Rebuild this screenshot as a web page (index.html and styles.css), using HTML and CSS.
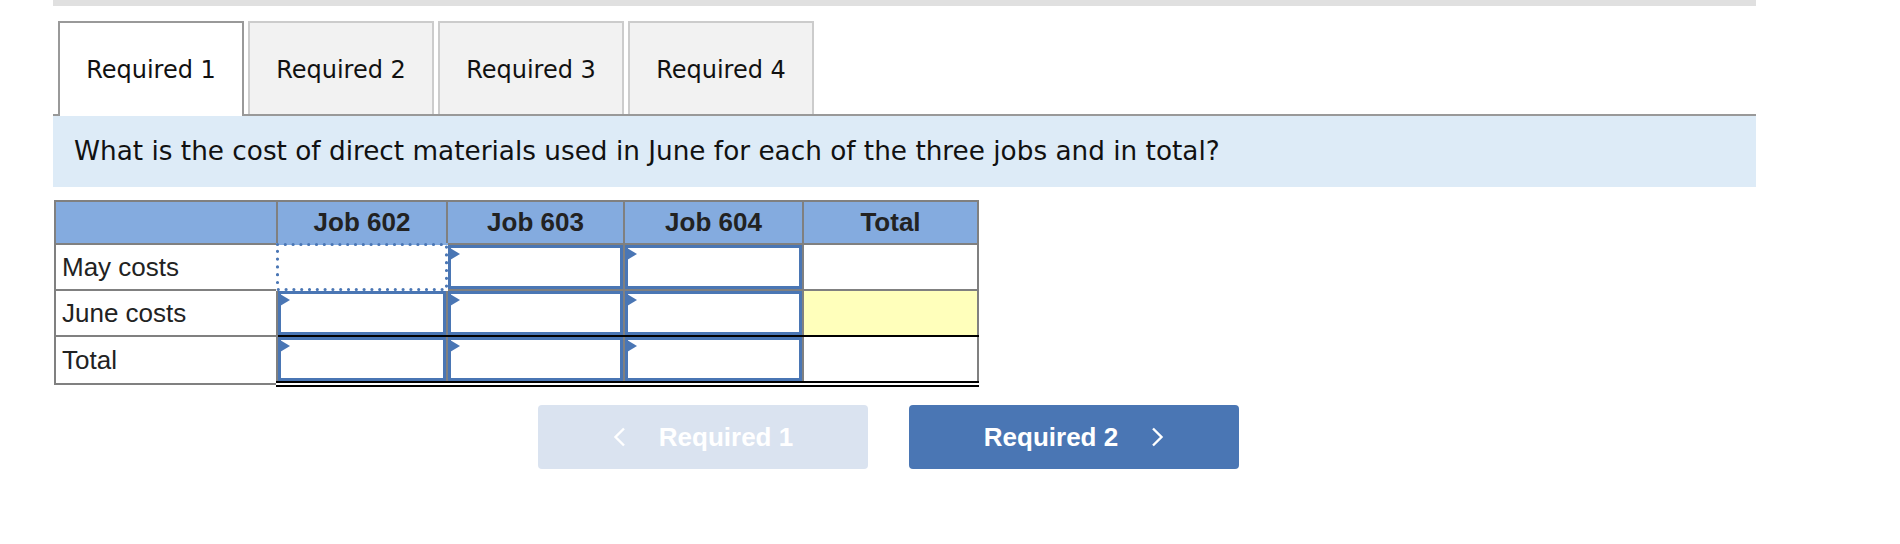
FILE: index.html
```html
<!DOCTYPE html>
<html>
<head>
<meta charset="utf-8">
<link rel="stylesheet" href="styles.css">
</head>
<body>
<div class="page">
  <div class="topbar"></div>
  <div class="tabs">
    <div class="tab active">Required 1</div>
    <div class="tab">Required 2</div>
    <div class="tab">Required 3</div>
    <div class="tab">Required 4</div>
  </div>
  <div class="question">What is the cost of direct materials used in June for each of the three jobs and in total?</div>
  <table class="grid">
    <colgroup>
      <col class="c-lbl"><col class="c-602"><col class="c-603"><col class="c-604"><col class="c-tot">
    </colgroup>
    <thead>
      <tr><th></th><th>Job 602</th><th>Job 603</th><th>Job 604</th><th>Total</th></tr>
    </thead>
    <tbody>
      <tr class="r1">
        <td class="lbl">May costs</td>
        <td class="in focus"><div class="dots"><svg class="dots-svg"><rect class="dots-rect"/></svg></div></td>
        <td class="in"><div class="box"><span class="mark"></span></div></td>
        <td class="in"><div class="box"><span class="mark"></span></div></td>
        <td class="tot"></td>
      </tr>
      <tr class="r2">
        <td class="lbl">June costs</td>
        <td class="in"><div class="box"><span class="mark"></span></div></td>
        <td class="in"><div class="box"><span class="mark"></span></div></td>
        <td class="in"><div class="box"><span class="mark"></span></div></td>
        <td class="tot yellow"></td>
      </tr>
      <tr class="r3">
        <td class="lbl">Total</td>
        <td class="in"><div class="box"><span class="mark"></span></div></td>
        <td class="in"><div class="box"><span class="mark"></span></div></td>
        <td class="in"><div class="box"><span class="mark"></span></div></td>
        <td class="tot"></td>
      </tr>
    </tbody>
  </table>
  <div class="nav">
    <button class="btn prev">
      <svg class="chev" width="13" height="20" viewBox="0 0 13 20"><polyline points="11,1.5 2.5,10 11,18.5" fill="none" stroke="#ffffff" stroke-width="2.4"/></svg>
      <span>Required 1</span>
    </button>
    <button class="btn next">
      <span>Required 2</span>
      <svg class="chev" width="13" height="20" viewBox="0 0 13 20"><polyline points="2,1.5 10.5,10 2,18.5" fill="none" stroke="#ffffff" stroke-width="2.4"/></svg>
    </button>
  </div>
</div>
</body>
</html>
```

FILE: styles.css
```css
html, body {
  margin: 0;
  padding: 0;
  background: #ffffff;
}

.page {
  margin-left: 53px;
  width: 1703px;
}

.topbar {
  height: 6px;
  background: #e0e0e0;
}

.tabs {
  display: flex;
  gap: 4px;
  margin-top: 15px;
  padding-left: 5px;
  border-bottom: 2px solid #999999;
  height: 93px;
}

.tab {
  box-sizing: border-box;
  width: 186px;
  height: 93px;
  border: 2px solid #cccccc;
  border-bottom: none;
  background: #f2f2f2;
  font-family: "DejaVu Sans", Verdana, sans-serif;
  font-size: 24px;
  color: #111111;
  display: flex;
  align-items: center;
  justify-content: center;
  padding-top: 2px;
}

.tab.active {
  background: #ffffff;
  border-color: #999999;
  height: 95px;
  padding-bottom: 2px;
  position: relative;
  z-index: 1;
}

.question {
  box-sizing: border-box;
  height: 71px;
  line-height: 71px;
  background: #ddebf7;
  padding: 0 21px;
  font-family: "DejaVu Sans", Verdana, sans-serif;
  font-size: 26.3px;
  color: #111111;
  white-space: nowrap;
}

.grid {
  margin-top: 13px;
  margin-left: 1px;
  border-collapse: collapse;
  font-family: "Liberation Sans", Arial, sans-serif;
  font-size: 26px;
  color: #222222;
  table-layout: fixed;
}

.c-lbl { width: 222px; }
.c-602 { width: 170px; }
.c-603 { width: 177px; }
.c-604 { width: 179px; }
.c-tot { width: 175px; }

.grid th, .grid td {
  border: 2px solid #808080;
  padding: 0;
}

.grid th {
  height: 41px;
  background: #84abdf;
  font-weight: bold;
  text-align: center;
}

.grid td {
  height: 44px;
  background: #ffffff;
}

.grid td.lbl {
  padding-left: 6px;
}

.grid td.yellow {
  background: #ffffbb;
}

.r2 td.in, .r2 td.tot {
  border-bottom: 2px solid #000000;
}

.r3 td.in, .r3 td.tot {
  border-bottom: 6px double #000000;
}

.box {
  box-sizing: border-box;
  height: 44px;
  border: 3px solid #4a76b4;
  position: relative;
}

.mark {
  position: absolute;
  left: -1px;
  top: 0;
  width: 0;
  height: 0;
  border-left: 10px solid #4a76b4;
  border-top: 6px solid transparent;
  border-bottom: 6px solid transparent;
}

td.focus {
  position: relative;
}

.dots {
  position: absolute;
  left: -2px;
  right: -2px;
  top: -2px;
  bottom: -2px;
  background: linear-gradient(#84abdf 0, #84abdf 2px, #ffffff 2px);
}

.dots-svg {
  display: block;
  width: 100%;
  height: 100%;
  overflow: visible;
}

.dots-rect {
  x: 1.5px;
  y: 1.5px;
  width: calc(100% - 3px);
  height: calc(100% - 3px);
  fill: none;
  stroke: #4a76b4;
  stroke-width: 3.2px;
  stroke-linecap: round;
  stroke-dasharray: 0 7.8;
}

.nav {
  display: flex;
  gap: 41px;
  margin-top: 18px;
  padding-left: 485px;
}

.btn {
  box-sizing: border-box;
  width: 330px;
  height: 64px;
  border: none;
  border-radius: 4px;
  font-family: "Liberation Sans", Arial, sans-serif;
  font-weight: bold;
  font-size: 26px;
  color: #ffffff;
  display: flex;
  align-items: center;
  justify-content: center;
  gap: 33px;
  padding: 0;
}

.btn.prev {
  background: #dae3f0;
}

.btn.next {
  background: #4a76b4;
}

.chev {
  display: block;
}
```
